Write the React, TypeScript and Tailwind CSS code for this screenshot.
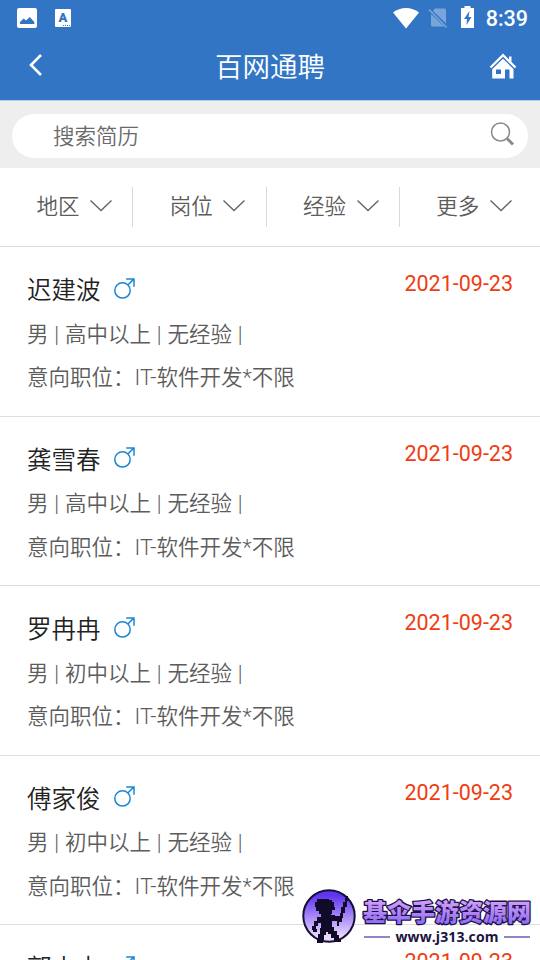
import { useState } from 'react';

interface Resume {
  id: number;
  name: string;
  gender: string;
  education: string;
  experience: string;
  position: string;
  date: string;
}

const FILTERS = ['地区', '岗位', '经验', '更多'];

const RESUMES: Resume[] = [
  { id: 1, name: '迟建波', gender: '男', education: '高中以上', experience: '无经验', position: 'IT-软件开发*不限', date: '2021-09-23' },
  { id: 2, name: '龚雪春', gender: '男', education: '高中以上', experience: '无经验', position: 'IT-软件开发*不限', date: '2021-09-23' },
  { id: 3, name: '罗冉冉', gender: '男', education: '初中以上', experience: '无经验', position: 'IT-软件开发*不限', date: '2021-09-23' },
  { id: 4, name: '傅家俊', gender: '男', education: '初中以上', experience: '无经验', position: 'IT-软件开发*不限', date: '2021-09-23' },
  { id: 5, name: '郭小山', gender: '男', education: '高中以上', experience: '无经验', position: 'IT-软件开发*不限', date: '2021-09-23' },
];

function StatusBar() {
  return (
    <div className="flex h-9 items-center justify-between pl-[17px] pr-[12px] text-white">
      <div className="flex items-center gap-[18px]">
        <svg width="20" height="20" viewBox="0 0 20 20">
          <rect width="20" height="20" rx="2" fill="#fff" />
          <path d="M3 16v-2l3.600-3.500 2.500 2 3.600-3.500 4.600 5v2z" fill="#3275c5" />
        </svg>
        <div className="relative h-[18px] w-4 rounded-[1px] bg-white text-center font-['Roboto'] text-[13px] leading-[17px] font-black text-[#3275c5]">
          A
          <span className="absolute right-[1px] bottom-[1px] w-[7px] border-t-[1.5px] border-dotted border-[#3275c5]" />
        </div>
      </div>
      <div className="flex items-center">
        <svg width="26" height="21" viewBox="0 0 26 21" fill="#fff">
          <path d="M0 4.500C7.500-1.500 18.500-1.500 26 4.500L13 20.500z" />
        </svg>
        <svg className="ml-[9px]" width="20" height="22" viewBox="0 0 20 22">
          <path d="M7 1.500h9.500Q18 1.500 18 3v13.500L5 4zM3 7l13 12.500H4.500Q3 19.500 3 18z" fill="#79a5db" />
          <path d="m1 2.500 17.500 18" stroke="#79a5db" strokeWidth="1.600" />
        </svg>
        <svg className="mb-[2px] ml-[12px]" width="15" height="22" viewBox="0 0 15 22">
          <path d="M4.500 0h6v2H14v20H1V2h3.500z" fill="#fff" />
          <path d="M9.500 5 4 13h3l-.500 6L11.500 11H8.600z" fill="#3275c5" />
        </svg>
        <span className="ml-[11px] pt-[2px] font-['Roboto'] text-[21.5px] leading-6 font-medium">8:39</span>
      </div>
    </div>
  );
}

function HomeIcon() {
  return (
    <svg width="28" height="26" viewBox="0 0 28 26" fill="none">
      <path d="m1.500 14.500 12.500-12.300 12.500 12.300" stroke="#fff" strokeWidth="2.400" />
      <path d="M20 3.500h2.500V9L20 6.500z" fill="#fff" />
      <path fillRule="evenodd" d="M14 5.800 3.200 16.300V25.500H16V16.500h4.500v9H24.500v-9.500zM7 16.500h5v4.500H7z" fill="#fff" />
    </svg>
  );
}

function MaleIcon() {
  return (
    <svg width="21" height="21" viewBox="0 0 21 21" fill="none" stroke="#1c86d2" strokeWidth="1.500">
      <circle cx="8.500" cy="12.400" r="7.700" />
      <path d="M13.800 7 20 .9M12.200 .9H20v7.800" />
    </svg>
  );
}

function ResumeCard({ resume }: { resume: Resume }) {
  return (
    <li className="h-[169.5px] border-b-[1.5px] border-[#dedede] px-[27px] pt-[22px] text-[21.5px] leading-[43.5px] font-[350] text-[#5c5c5c]">
      <div className="flex justify-between">
        <div className="flex items-center">
          <h2 className="text-[24.5px] text-[#222]">{resume.name}</h2>
          <span className="ml-[13px] pb-[5px]">
            <MaleIcon />
          </span>
        </div>
        <time className="leading-[30px] font-normal text-[#f03c10]">{resume.date}</time>
      </div>
      <p className="[word-spacing:0.6px]">
        {resume.gender} | {resume.education} | {resume.experience} |
      </p>
      <p>意向职位：{resume.position}</p>
    </li>
  );
}

// Site mark shown over the lower right corner of the list
function SiteMark() {
  return (
    <div className="absolute right-2 bottom-[12px] flex w-[230px] items-start">
      <svg className="shrink-0" width="54" height="60" viewBox="0 0 54 60">
        <defs>
          <linearGradient id="disc" x1="0" y1="0" x2="0" y2="1">
            <stop offset="0.1" stopColor="#6034ef" />
            <stop offset="0.9" stopColor="#ead9ff" />
          </linearGradient>
        </defs>
        <circle cx="27" cy="28" r="25.700" fill="url(#disc)" stroke="#160f3a" strokeWidth="2" />
        {/* warrior with a raised sword */}
        <path
          d="M18 11h9v1h3v2h2v5h1v3h-3v4h-1v1h4v1h5v-3h1v-6h2v-5h2v-4h1v-2h2v5h-1v6h-2v6h-2v5h-1v4h-3v4h-2v-5h-5v6h2v4h3v4h2v4h2v3h-7v-4h-3v-4h-3v-2h-2v3h-2v5h-1v3h-6v-3h1v-6h2v-6h1v-5h-3v3h-2v3h1v3h-4v-2h-1v-4h2v-5h3v-4h4v-3h-2v-3h-3v-4h-1v-5h2v-3h3z"
          fill="#100b29"
        />
      </svg>
      <div className="ml-[6px] flex flex-col items-center pt-[9px]">
        <svg width="170" height="30" viewBox="0 0 170 30">
          <defs>
            <linearGradient id="letters" x1="0" y1="0" x2="0" y2="1">
              <stop offset="0.1" stopColor="#dda6fb" />
              <stop offset="0.9" stopColor="#8f6bf2" />
            </linearGradient>
          </defs>
          <text
            x="1"
            y="24"
            textLength="168"
            fontSize="24"
            fontWeight="900"
            fontFamily="'Noto Sans CJK SC', sans-serif"
            fill="url(#letters)"
            stroke="#1b1147"
            strokeWidth="2.600"
            strokeLinejoin="round"
            paintOrder="stroke"
          >
            基伞手游资源网
          </text>
        </svg>
        <div className="mt-[1px] flex w-[166px] items-center justify-between">
          <span className="h-[1.5px] w-[26px] bg-[#8f86c8]" />
          <span className="font-['Open_Sans'] text-[14px] leading-[18px] font-bold tracking-[0.1px] whitespace-nowrap text-[#1b1440]">www.j313.com</span>
          <span className="h-[1.5px] w-[26px] bg-[#8f86c8]" />
        </div>
      </div>
    </div>
  );
}

export default function App() {
  const [keyword, setKeyword] = useState('');

  return (
    <div className="relative h-[960px] w-[540px] overflow-hidden bg-white font-['Roboto','Noto_Sans_CJK_SC',sans-serif]">
      <header className="h-[100px] bg-[#3275c5]">
        <StatusBar />
        <div className="grid h-[60px] grid-cols-3 items-center px-[23px] text-white">
          <svg className="mb-[2px] ml-[4px]" width="18" height="24" viewBox="0 0 18 24" fill="none">
            <path d="M14 2 4 12l10 10" stroke="#fff" strokeWidth="2.600" />
          </svg>
          <h1 className="pt-[4px] text-center text-[27.5px] leading-10 font-[350]">百网通聘</h1>
          <div className="justify-self-end">
            <HomeIcon />
          </div>
        </div>
      </header>

      {/* Search */}
      <div className="h-[68px] border-t border-[#b9cde6] bg-[#eeeeef] px-3 pt-[13px]">
        <div className="flex h-[44px] items-center rounded-full bg-white pr-[12px] pl-[41px]">
          <input
            type="text"
            value={keyword}
            onChange={(e) => setKeyword(e.target.value)}
            placeholder="搜索简历"
            className="h-full min-w-0 flex-1 text-[21.5px] font-[350] text-[#666] outline-none placeholder:text-[#6a6a6a]"
          />
          <svg className="mb-[5px]" width="26" height="26" viewBox="0 0 26 26" fill="none" stroke="#8a8a8a">
            <circle cx="10.500" cy="11" r="9" strokeWidth="1.500" />
            <path d="m16.500 17 2 2" strokeWidth="1.500" />
            <path d="m17.500 18 5.500 5.500" strokeWidth="3" />
          </svg>
        </div>
      </div>

      {/* Filters */}
      <nav className="grid h-[79px] grid-cols-4 border-b-[1.5px] border-[#dedede] pt-[19px] pr-[7px]">
        {FILTERS.map((label) => (
          <button
            key={label}
            type="button"
            className="flex h-[40px] items-center border-r-[1.5px] border-[#dadada] pl-[36.5px] text-[21.5px] leading-10 font-[350] text-[#5c5c5c] last:border-r-0"
          >
            <span>{label}</span>
            <svg className="mb-[3px] ml-[9.5px] shrink-0" width="24" height="14" viewBox="0 0 24 14" fill="none">
              <path d="m1.500 1.500 10.500 10 10.500-10" stroke="#666" strokeWidth="1.400" />
            </svg>
          </button>
        ))}
      </nav>

      <ul>
        {RESUMES.map((resume) => (
          <ResumeCard key={resume.id} resume={resume} />
        ))}
      </ul>

      <SiteMark />
    </div>
  );
}
